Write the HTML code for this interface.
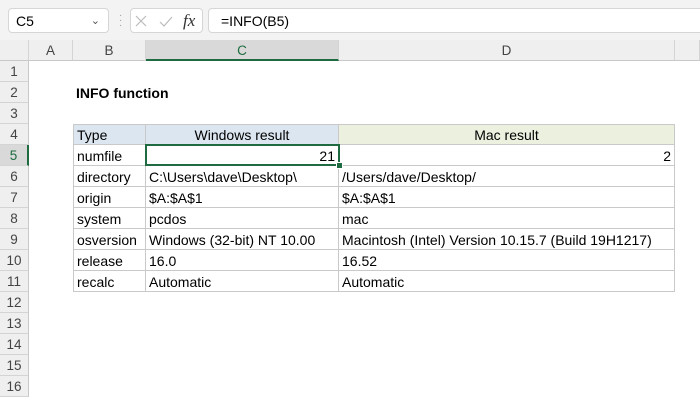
<!DOCTYPE html>
<html><head><style>
*{margin:0;padding:0;box-sizing:border-box}
body{width:700px;height:400px;overflow:hidden;background:#fff;font-family:"Liberation Sans",Arial,sans-serif;font-size:14px;color:#000;position:relative}
.bar{position:absolute;left:0;top:0;width:700px;height:40px;background:#f3f3f3}
.box{position:absolute;background:#fff;border:1px solid #d6d6d6;border-radius:4px}
.ch{position:absolute;top:40px;height:21px;background:#efefef;border-right:1px solid #d4d4d4;border-bottom:1px solid #c8c8c8;text-align:center;line-height:22px;color:#444;font-size:13.5px}
.rh{position:absolute;left:0;width:29px;height:21px;background:#efefef;border-bottom:1px solid #d4d4d4;border-right:1px solid #c8c8c8;text-align:center;line-height:22px;color:#444;font-size:13.5px}
.c{position:absolute;height:21px;line-height:23px;padding:0 3px;border-right:1px solid #c9c9c9;border-bottom:1px solid #c9c9c9;white-space:nowrap;overflow:hidden}
</style></head><body>
<div class="bar"></div>
<div class="box" style="left:8px;top:8px;width:101px;height:25px;line-height:24px;padding-left:7px">C5<span style="position:absolute;right:8px;top:0;font-size:11px;color:#555">&#8964;</span></div>
<div style="position:absolute;left:119px;top:13px;color:#999;font-size:10px;line-height:5px">·<br>·<br>·</div>
<div class="box" style="left:130px;top:8px;width:73px;height:25px">
<svg width="73" height="25" style="position:absolute;left:0;top:0"><path d="M5 7l10 10M15 7L5 17" stroke="#bbb" stroke-width="1.2" fill="none"/><path d="M29 13l4 4 8-9" stroke="#bbb" stroke-width="1.2" fill="none"/></svg>
<span style="position:absolute;left:52px;top:2px;font-family:'Liberation Serif',serif;font-style:italic;font-size:17px;color:#333">fx</span></div>
<div class="box" style="left:208px;top:8px;width:500px;height:25px;line-height:24px;padding-left:12px">=INFO(B5)</div>

<div class="ch" style="left:0;width:29px"></div>
<div class="ch" style="left:29px;width:44px">A</div>
<div class="ch" style="left:73px;width:73px">B</div>
<div class="ch" style="left:146px;width:193px;background:#d9d9d9;color:#1e6b41;border-bottom:2px solid #1e6b41">C</div>
<div class="ch" style="left:339px;width:336px">D</div>
<div class="ch" style="left:675px;width:25px"></div>

<div class="rh" style="top:61px">1</div><div class="rh" style="top:82px">2</div><div class="rh" style="top:103px">3</div><div class="rh" style="top:124px">4</div>
<div class="rh" style="top:145px;background:#d9d9d9;color:#1e6b41;border-right:2px solid #1e6b41">5</div>
<div class="rh" style="top:166px">6</div><div class="rh" style="top:187px">7</div><div class="rh" style="top:208px">8</div><div class="rh" style="top:229px">9</div><div class="rh" style="top:250px">10</div><div class="rh" style="top:271px">11</div><div class="rh" style="top:292px">12</div><div class="rh" style="top:313px">13</div><div class="rh" style="top:334px">14</div><div class="rh" style="top:355px">15</div><div class="rh" style="top:376px">16</div>

<div style="position:absolute;left:76px;top:82px;line-height:23px;font-weight:bold">INFO function</div>

<div style="position:absolute;left:73px;top:124px;width:1px;height:168px;background:#c9c9c9"></div>
<div style="position:absolute;left:73px;top:124px;width:602px;height:1px;background:#c9c9c9"></div>

<div class="c" style="left:74px;top:125px;width:72px;height:20px;line-height:21px;background:#dce6f0">Type</div>
<div class="c" style="left:146px;top:125px;width:193px;height:20px;line-height:21px;background:#dce6f0;text-align:center">Windows result</div>
<div class="c" style="left:339px;top:125px;width:336px;height:20px;line-height:21px;background:#ebf0df;text-align:center">Mac result</div>

<div class="c" style="left:74px;top:145px;width:72px">numfile</div>
<div class="c" style="left:146px;top:145px;width:193px;text-align:right">21</div>
<div class="c" style="left:339px;top:145px;width:336px;text-align:right">2</div>

<div class="c" style="left:74px;top:166px;width:72px">directory</div>
<div class="c" style="left:146px;top:166px;width:193px">C:\Users\dave\Desktop\</div>
<div class="c" style="left:339px;top:166px;width:336px">/Users/dave/Desktop/</div>

<div class="c" style="left:74px;top:187px;width:72px">origin</div>
<div class="c" style="left:146px;top:187px;width:193px">$A:$A$1</div>
<div class="c" style="left:339px;top:187px;width:336px">$A:$A$1</div>

<div class="c" style="left:74px;top:208px;width:72px">system</div>
<div class="c" style="left:146px;top:208px;width:193px">pcdos</div>
<div class="c" style="left:339px;top:208px;width:336px">mac</div>

<div class="c" style="left:74px;top:229px;width:72px">osversion</div>
<div class="c" style="left:146px;top:229px;width:193px">Windows (32-bit) NT 10.00</div>
<div class="c" style="left:339px;top:229px;width:336px">Macintosh (Intel) Version 10.15.7 (Build 19H1217)</div>

<div class="c" style="left:74px;top:250px;width:72px">release</div>
<div class="c" style="left:146px;top:250px;width:193px">16.0</div>
<div class="c" style="left:339px;top:250px;width:336px">16.52</div>

<div class="c" style="left:74px;top:271px;width:72px">recalc</div>
<div class="c" style="left:146px;top:271px;width:193px">Automatic</div>
<div class="c" style="left:339px;top:271px;width:336px">Automatic</div>

<div style="position:absolute;left:145px;top:144px;width:195px;height:22px;border:2px solid #1e6b41"></div>
<div style="position:absolute;left:337px;top:163px;width:5px;height:5px;background:#1e6b41;outline:1px solid #fff"></div>
</body></html>
